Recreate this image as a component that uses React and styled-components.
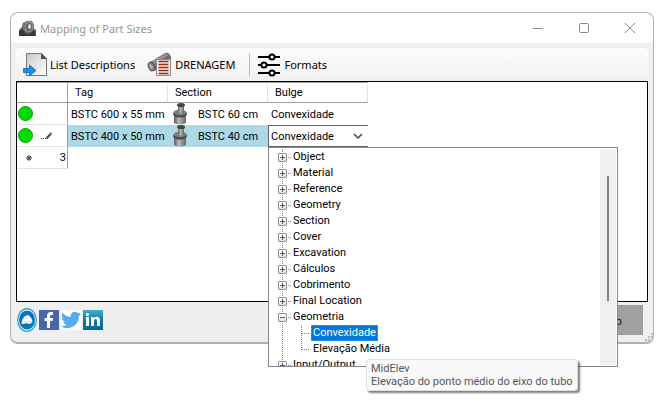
import React, { useState } from 'react';
import styled, { createGlobalStyle } from 'styled-components';

const GlobalStyle = createGlobalStyle`
  * {
    box-sizing: border-box;
  }
  body {
    margin: 0;
    background: #fff;
    color: #000;
    font-family: Roboto, 'Liberation Sans', sans-serif;
    font-size: 11px;
  }
  button, select {
    font: inherit;
    color: inherit;
  }
`;

const Desktop = styled.div`
  display: flex;
  min-height: 100vh;
  padding: 12px 18px 64px 10px;
`;

const Window = styled.main`
  flex: 1;
  display: flex;
  flex-direction: column;
  min-width: 0;
  border: 1px solid #b0b0b0;
  border-bottom-width: 2px;
  border-radius: 8px;
  background: #efefef;
`;

const TitleBar = styled.header`
  display: flex;
  align-items: center;
  height: 30px;
  padding-left: 8px;
  border-radius: 7px 7px 0 0;
  background: #fff;
`;

const Title = styled.h1`
  flex: 1;
  margin: 0 0 0 4px;
  font-family: 'Noto Sans', sans-serif;
  font-size: 11px;
  font-weight: 400;
  color: #969696;
`;

const CaptionButton = styled.button`
  display: flex;
  align-items: center;
  justify-content: center;
  width: 46px;
  height: 30px;
  padding: 0;
  border: 0;
  background: none;
`;

const Content = styled.div`
  flex: 1;
  display: flex;
  flex-direction: column;
  padding: 5px;
`;

const Toolbar = styled.div`
  display: flex;
  align-items: center;
  height: 33px;
  padding-left: 7px;
  border-radius: 4px;
  background: linear-gradient(#fcfcfc, #f0f0f0);
  font-family: 'Noto Sans', sans-serif;
`;

const ToolButton = styled.button`
  display: flex;
  align-items: center;
  gap: 3px;
  padding: 0;
  margin-right: ${(props) => props.$after || 0}px;
  border: 0;
  background: none;
  font-size: 11px;
  white-space: nowrap;
`;

const Separator = styled.span`
  width: 1px;
  height: 23px;
  margin: 0 7px 0 14px;
  background: #bdbdbd;
`;

const GridPanel = styled.section`
  flex: 1;
  border: 1px solid #000;
  background: #fff;
`;

const Grid = styled.table`
  table-layout: fixed;
  width: 351px;
  border-collapse: separate;
  border-spacing: 0;
`;

const HeadCell = styled.th`
  width: ${(props) => props.$width}px;
  height: 21px;
  padding: 0 0 0 7px;
  border-right: 1px solid ${(props) => (props.$corner ? '#a0a0a0' : '#e3e3e3')};
  border-bottom: 1px solid #a0a0a0;
  border-top: 1px solid #a0a0a0;
  font-weight: 400;
  text-align: left;
`;

const RowHead = styled.th`
  height: 22px;
  padding: 0;
  border-right: 1px solid #a0a0a0;
  border-bottom: 1px solid #e3e3e3;
  font-weight: 400;
`;

const RowMarks = styled.div`
  display: flex;
  align-items: center;
  gap: 8px;
  padding-left: ${(props) => (props.$blank ? 9 : 1)}px;
`;

const RowNumber = styled.span`
  flex: 1;
  padding-right: 1px;
  text-align: right;
`;

const Status = styled.span`
  width: 15px;
  height: 15px;
  border: 1px solid #0a9a0a;
  border-radius: 50%;
  background: #00dc00;
`;

const Cell = styled.td`
  position: relative;
  height: 22px;
  padding: 0 0 0 ${(props) => (props.$editing ? 0 : 3)}px;
  background: ${(props) => (props.$selected ? '#add8e6' : 'transparent')};
  white-space: nowrap;
`;

const SectionValue = styled.div`
  display: flex;
  align-items: center;
  gap: 10px;
  height: 22px;
`;

const Combo = styled.div`
  display: flex;
  align-items: center;
  height: 22px;
  border: 1px solid #646464;
  border-right: 0;
  background: #fff;
  svg {
    margin: 0 5px 0 -15px;
    pointer-events: none;
  }
`;

const ComboSelect = styled.select`
  flex: 1;
  min-width: 0;
  height: 20px;
  padding: 0 0 0 2px;
  border: 0;
  outline: 0;
  appearance: none;
  background: none;
`;

const DropDown = styled.div`
  position: absolute;
  top: 22px;
  left: 0;
  z-index: 2;
  width: 350px;
  border: 1px solid #828790;
  background: #fff;
`;

const TreeView = styled.div`
  display: flex;
  height: 218px;
  padding: 1px;
  overflow: hidden;
`;

const Tree = styled.ul`
  flex: 1;
  margin: 0;
  padding: 0 0 0 8px;
  list-style: none;
`;

const Branch = styled.li`
  background: repeating-linear-gradient(#808080 0 1px, transparent 1px 2px) 4px 0 / 1px 100% no-repeat;
`;

const Node = styled.div`
  display: flex;
  align-items: center;
  height: 16px;
`;

const Expander = styled.button`
  display: flex;
  width: 9px;
  height: 9px;
  padding: 0;
  border: 1px solid #919191;
  border-radius: 1px;
  background: linear-gradient(#fff, #e4e4e4);
`;

const Dots = styled.span`
  width: ${(props) => props.$width}px;
  height: 1px;
  margin-right: 1px;
  background: repeating-linear-gradient(90deg, transparent 0 1px, #808080 1px 2px);
`;

const Label = styled.span`
  padding: 0 1px;
  line-height: 16px;
  white-space: nowrap;
`;

const Children = styled.ul`
  margin: 0;
  padding: 0 0 0 23px;
  list-style: none;
`;

const Leaf = styled.li`
  display: flex;
  align-items: center;
  height: 16px;
  background: repeating-linear-gradient(#808080 0 1px, transparent 1px 2px) 0 0 / 1px ${(props) => (props.$last ? '9px' : '16px')} no-repeat;
`;

const LeafButton = styled.button`
  height: 16px;
  padding: 0 1px;
  border: 1px ${(props) => (props.$active ? 'dotted #e08a2c' : 'solid transparent')};
  background: ${(props) => (props.$active ? '#0078d7' : 'none')};
  color: ${(props) => (props.$active ? '#fff' : '#000')};
  line-height: 14px;
`;

const ScrollTrack = styled.div`
  display: flex;
  justify-content: center;
  width: 16px;
  padding: 27px 0 64px;
  background: #f0f0f0;
`;

const ScrollThumb = styled.span`
  width: 2px;
  background: #858585;
`;

const Tooltip = styled.div`
  position: absolute;
  top: 211px;
  left: 97px;
  padding: 2px 4px;
  border: 1px solid #e0e0e0;
  border-radius: 3px;
  background: #f9f9f9;
  box-shadow: 2px 2px 2px rgba(0, 0, 0, 0.5);
  color: #575757;
  line-height: 13px;
  white-space: nowrap;
`;

const Footer = styled.footer`
  display: flex;
  align-items: center;
  gap: 2px;
  height: 35px;
  padding: 1px 3px 0 1px;
`;

const SocialLink = styled.a`
  display: flex;
`;

const ActionButton = styled.button`
  width: 96px;
  height: 30px;
  margin-left: auto;
  border: 0;
  background: #a0a0a0;
  font-family: 'Noto Sans', sans-serif;
  font-size: 11px;
`;

const Grip = styled.svg`
  align-self: flex-end;
  margin: 0 -8px -4px 0;
`;

const AppIcon = () => (
  <svg width="17" height="17" viewBox="0 0 17 17">
    <path d="M0 16v-6l3-3 1-4 4-2 5 0 2 4v5l2-1v7z" fill="#5a5a5a" />
    <path d="M0 16v-5l4-1 2 4h5l3-3 2-1v6z" fill="#383838" />
    <ellipse cx="9.500" cy="6.500" rx="5" ry="6" fill="#8f8f8f" />
    <ellipse cx="10" cy="7" rx="3" ry="4" fill="#5d5d5d" />
    <ellipse cx="10.500" cy="6.500" rx="1.500" ry="2.500" fill="#e0e0e0" />
    <path d="M4 9l1-6 3-2-2 4v5z" fill="#777" />
  </svg>
);

const ListIcon = () => (
  <svg width="24" height="25" viewBox="0 0 24 25">
    <defs>
      <linearGradient id="page" x1="0" y1="0" x2="1" y2="1">
        <stop offset="0" stopColor="#c9c9c9" />
        <stop offset="1" stopColor="#fff" />
      </linearGradient>
    </defs>
    <path d="M3.500 1.500h15l5 5v17h-20z" fill="url(#page)" stroke="#777" />
    <path d="M18 1l6 6h-6z" fill="#505050" />
    <path d="M0.500 16.500h6v-3.500l6.500 5.500-6.500 5.500v-3.500h-6z" fill="#0c95f5" stroke="#075aa5" strokeWidth="0.700" />
  </svg>
);

const PipeIcon = () => (
  <svg width="25" height="25" viewBox="0 0 25 25">
    <path d="M2 11L18 1q4-1 6 4v5L7 19z" fill="#6d6d6d" />
    <path d="M4 10L18 1.500l4 1.500-15 9z" fill="#929292" />
    <ellipse cx="4.500" cy="14.500" rx="3" ry="4.500" fill="#858585" stroke="#515151" transform="rotate(-25 4.500 14.500)" />
    <ellipse cx="4" cy="14.500" rx="1.300" ry="2.500" fill="#b5b5b5" transform="rotate(-25 4 14.500)" />
    <path d="M9.500 7.500h14v16h-14z" fill="#ededed" stroke="#8b8b8b" />
    <path d="M11.500 9.500h10M11.500 12.500h10M11.500 15.500h10M11.500 18.500h10M11.500 21.500h10" stroke="#982d10" strokeWidth="1.300" />
  </svg>
);

const SlidersIcon = () => (
  <svg width="24" height="24" viewBox="0 0 24 24" fill="#f8f8f8" stroke="#000" strokeWidth="2">
    <path d="M1 4h22M1 12h22M1 20h22" />
    <circle cx="15" cy="4" r="2.600" />
    <circle cx="7" cy="12" r="2.600" />
    <circle cx="15" cy="20" r="2.600" />
  </svg>
);

const SectionIcon = () => (
  <svg width="17" height="22" viewBox="0 0 17 22">
    <defs>
      <linearGradient id="metal">
        <stop offset="0" stopColor="#5d5d5d" />
        <stop offset="0.400" stopColor="#b8b8b8" />
        <stop offset="1" stopColor="#666" />
      </linearGradient>
    </defs>
    <path d="M3 11v9q5.500 3 12 0v-9z" fill="url(#metal)" />
    <ellipse cx="9" cy="11" rx="7" ry="3.500" fill="#464646" />
    <ellipse cx="9" cy="9.500" rx="6.500" ry="3" fill="#7c7c7c" />
    <path d="M7 2v8q3 1.500 6 0V2z" fill="url(#metal)" />
    <ellipse cx="10" cy="2" rx="4" ry="2" fill="#444" />
  </svg>
);

const PencilIcon = () => (
  <svg width="12" height="9" viewBox="0 0 12 9">
    <path d="M0 7.500h1M2 7.500h1M4 7.500h1" stroke="#333" />
    <path d="M5.500 7.500L10 2.500" stroke="#444" strokeWidth="2" />
    <path d="M9.500 1.500l1.500 1" stroke="#777" />
  </svg>
);

const NewRowIcon = () => (
  <svg width="6" height="6" viewBox="0 0 6 6" stroke="#444">
    <path d="M3 0v6M0 3h6M1 1l4 4M5 1L1 5" />
    <circle cx="3" cy="3" r="1.500" fill="#555" stroke="none" />
  </svg>
);

const BrandIcon = () => (
  <svg width="20" height="24" viewBox="0 0 20 24">
    <ellipse cx="10" cy="12" rx="9.300" ry="11.300" fill="#fff" stroke="#3ca4d8" strokeWidth="1.400" />
    <ellipse cx="10" cy="12" rx="8" ry="9.600" fill="#0874b9" />
    <path d="M4.500 15.500q0-4 3-7l3-1.500 2 1q3 3 3 6l-2.500 2q-4-1.500-7 0z" fill="#fff" />
    <path d="M5 13.500q4 .5 5 0t5 0M10 8l-1 3" fill="none" stroke="#8fc3e2" strokeWidth="0.600" />
  </svg>
);

const FacebookIcon = () => (
  <svg width="20" height="20" viewBox="0 0 20 20">
    <path d="M0 0h20v20H0z" fill="#4867aa" />
    <path d="M8 18v-7H5.500V8H8V6q0-4 4-4h2v3h-1.500q-1.500 0-1.500 1.500V8h3l-.5 3H11v7z" fill="#fff" />
  </svg>
);

const TwitterIcon = () => (
  <svg width="20" height="20" viewBox="0 0 24 24">
    <path d="M0 0h24v24H0z" fill="#fff" />
    <path d="M24 4.600a10 10 0 01-2.800.8 5 5 0 002.100-2.700 10 10 0 01-3.100 1.200 4.900 4.900 0 00-8.400 4.500A14 14 0 011.700 3.200a4.900 4.900 0 001.500 6.500 5 5 0 01-2.200-.6 4.900 4.900 0 003.900 4.900 5 5 0 01-2.200.1 4.900 4.900 0 004.600 3.400A9.900 9.900 0 010 19.500 14 14 0 0021.500 7.100 10 10 0 0024 4.600z" fill="#55acee" />
  </svg>
);

const LinkedInIcon = () => (
  <svg width="20" height="20" viewBox="0 0 20 20">
    <defs>
      <linearGradient id="linked" x1="0" y1="0" x2="0" y2="1">
        <stop offset="0" stopColor="#48acc8" />
        <stop offset="0.500" stopColor="#0e7aab" />
        <stop offset="1" stopColor="#006699" />
      </linearGradient>
    </defs>
    <path d="M0 0h20v20H0z" fill="url(#linked)" />
    <path d="M3 7h3v9H3zM8 7h2.800v1.300Q12 6.700 14 6.800q3 .2 3 3.500V16h-3v-5q0-2-1.500-2T11 11v5H8z" fill="#fff" />
    <circle cx="4.500" cy="4.500" r="1.600" fill="#fff" />
  </svg>
);

const rows = [
  { tag: 'BSTC 600 x 55 mm', section: 'BSTC 60 cm', bulge: 'Convexidade' },
  { tag: 'BSTC 400 x 50 mm', section: 'BSTC 40 cm', editing: true },
];

const branches = [
  'Object', 'Material', 'Reference', 'Geometry', 'Section', 'Cover', 'Excavation',
  'Cálculos', 'Cobrimento', 'Final Location', 'Geometria', 'Input/Output',
];

const leaves = ['Convexidade', 'Elevação Média'];

const social = [
  { name: 'Website', Icon: BrandIcon },
  { name: 'Facebook', Icon: FacebookIcon },
  { name: 'Twitter', Icon: TwitterIcon },
  { name: 'LinkedIn', Icon: LinkedInIcon },
];

const BulgeEditor = () => {
  const [value, setValue] = useState('Convexidade');
  const [open, setOpen] = useState(['Geometria']);

  const toggle = (name) =>
    setOpen(open.includes(name) ? open.filter((item) => item !== name) : [...open, name]);

  return (
    <>
      <Combo>
        <ComboSelect aria-label="Bulge" value={value} onChange={(e) => setValue(e.target.value)}>
          {leaves.map((leaf) => <option key={leaf}>{leaf}</option>)}
        </ComboSelect>
        <svg width="10" height="6" viewBox="0 0 10 6" fill="none" stroke="#444" strokeWidth="1.500">
          <path d="M1 1l4 4 4-4" />
        </svg>
      </Combo>
      <DropDown>
        <TreeView>
          <Tree>
            {branches.map((name) => {
              const expanded = open.includes(name);
              return (
                <Branch key={name}>
                  <Node>
                    <Expander aria-label={name} aria-expanded={expanded} onClick={() => toggle(name)}>
                      <svg width="7" height="7" viewBox="0 0 7 7" stroke="#3c5a96">
                        <path d={expanded ? 'M1 3.500h5' : 'M1 3.500h5M3.500 1v5'} />
                      </svg>
                    </Expander>
                    <Dots $width={4} />
                    <Label>{name}</Label>
                  </Node>
                  {expanded && name === 'Geometria' && (
                    <Children>
                      {leaves.map((leaf, i) => (
                        <Leaf key={leaf} $last={i === leaves.length - 1}>
                          <Dots $width={9} />
                          <LeafButton $active={leaf === value} onClick={() => setValue(leaf)}>{leaf}</LeafButton>
                        </Leaf>
                      ))}
                    </Children>
                  )}
                </Branch>
              );
            })}
          </Tree>
          <ScrollTrack>
            <ScrollThumb />
          </ScrollTrack>
        </TreeView>
        <Tooltip role="tooltip">
          MidElev<br />Elevação do ponto médio do eixo do tubo
        </Tooltip>
      </DropDown>
    </>
  );
};

const App = () => (
  <>
    <GlobalStyle />
    <Desktop>
      <Window>
        <TitleBar>
          <AppIcon />
          <Title>Mapping of Part Sizes</Title>
          <CaptionButton aria-label="Minimize">
            <svg width="10" height="10" stroke="#8c8c8c"><path d="M0 5.500h10" /></svg>
          </CaptionButton>
          <CaptionButton aria-label="Maximize">
            <svg width="10" height="10" fill="none" stroke="#8c8c8c"><rect x="0.500" y="0.500" width="9" height="9" rx="1" /></svg>
          </CaptionButton>
          <CaptionButton aria-label="Close">
            <svg width="10" height="10" stroke="#8c8c8c"><path d="M0 0l10 10M10 0L0 10" /></svg>
          </CaptionButton>
        </TitleBar>
        <Content>
          <Toolbar>
            <ToolButton $after={12}><ListIcon />List Descriptions</ToolButton>
            <ToolButton><PipeIcon />DRENAGEM</ToolButton>
            <Separator />
            <ToolButton><SlidersIcon />Formats</ToolButton>
          </Toolbar>
          <GridPanel>
            <Grid>
              <thead>
                <tr>
                  <HeadCell $width={51} $corner />
                  <HeadCell $width={100}>Tag</HeadCell>
                  <HeadCell $width={100}>Section</HeadCell>
                  <HeadCell $width={100}>Bulge</HeadCell>
                </tr>
              </thead>
              <tbody>
                {rows.map((row) => (
                  <tr key={row.tag}>
                    <RowHead>
                      <RowMarks>
                        <Status />
                        {row.editing && <PencilIcon />}
                      </RowMarks>
                    </RowHead>
                    <Cell $selected={row.editing}>{row.tag}</Cell>
                    <Cell $selected={row.editing}>
                      <SectionValue><SectionIcon />{row.section}</SectionValue>
                    </Cell>
                    <Cell $editing={row.editing}>{row.editing ? <BulgeEditor /> : row.bulge}</Cell>
                  </tr>
                ))}
                <tr>
                  <RowHead>
                    <RowMarks $blank>
                      <NewRowIcon />
                      <RowNumber>3</RowNumber>
                    </RowMarks>
                  </RowHead>
                </tr>
              </tbody>
            </Grid>
          </GridPanel>
          <Footer>
            {social.map(({ name, Icon }) => (
              <SocialLink key={name} href="#" aria-label={name}><Icon /></SocialLink>
            ))}
            <ActionButton>Cancelado</ActionButton>
            <Grip width="8" height="8" fill="#bcbcbc">
              <path d="M6 0h2v2H6zM3 3h2v2H3zM6 3h2v2H6zM0 6h2v2H0zM3 6h2v2H3zM6 6h2v2H6z" />
            </Grip>
          </Footer>
        </Content>
      </Window>
    </Desktop>
  </>
);

export default App;
